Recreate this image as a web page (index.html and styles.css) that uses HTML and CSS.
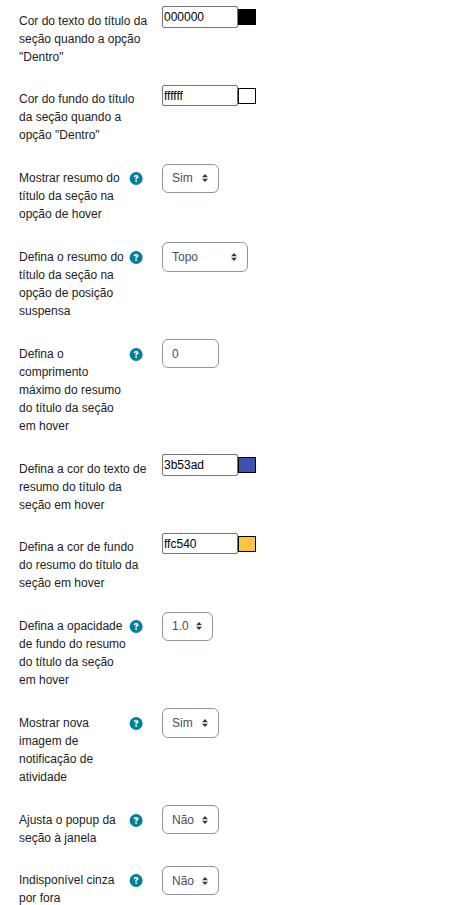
FILE: index.html
```
<!DOCTYPE html>
<html lang="pt-BR">
<head>
<meta charset="utf-8">
<title>Configurações</title>
<link rel="stylesheet" href="styles.css">
</head>
<body>
<svg class="defs" width="0" height="0" aria-hidden="true">
<symbol id="help" viewBox="-24 0 551 512"><circle cx="256" cy="256" r="256"/><path class="mark" d="M169.8 165.3c7.9-22.3 29.1-37.3 52.8-37.3h58.3c34.9 0 63.1 28.3 63.1 63.1c0 22.6-12.1 43.5-31.7 54.8L280 264.4c-.2 13-10.9 23.6-24 23.6c-13.3 0-24-10.7-24-24V250.5c0-8.6 4.6-16.5 12.1-20.8l44.3-25.4c4.7-2.7 7.6-7.7 7.6-13.1c0-8.4-6.8-15.1-15.1-15.1H222.6c-3.4 0-6.4 2.1-7.5 5.3l-.4 1.2c-4.4 12.5-18.2 19-30.6 14.6s-19-18.2-14.6-30.6l.4-1.2zM224 352a32 32 0 1 1 64 0 32 32 0 1 1-64 0z"/></symbol>
<symbol id="arrows" viewBox="0 0 4 5" preserveAspectRatio="none"><path d="M2 0L0 2h4zm0 5L0 3h4z"/></symbol>
</svg>
<main class="form">
<div class="row low"><div class="label">Cor do texto do título da<br>seção quando a opção<br>"Dentro"</div><div class="color tall"><span class="hex">000000</span><span class="swatch black"></span></div></div>
<div class="row"><div class="label">Cor do fundo do título<br>da seção quando a<br>opção "Dentro"</div><div class="color"><span class="hex">ffffff</span><span class="swatch white"></span></div></div>
<div class="row"><div class="label">Mostrar resumo do<br>título da seção na<br>opção de hover</div><svg class="help"><use href="#help"/></svg><div class="field raised">Sim<svg class="arrows"><use href="#arrows"/></svg></div></div>
<div class="row low"><div class="label">Defina o resumo do<br>título da seção na<br>opção de posição<br>suspensa</div><svg class="help"><use href="#help"/></svg><div class="field wide tall">Topo<svg class="arrows"><use href="#arrows"/></svg></div></div>
<div class="row low"><div class="label">Defina o<br>comprimento<br>máximo do resumo<br>do título da seção<br>em hover</div><svg class="help"><use href="#help"/></svg><div class="field">0</div></div>
<div class="row low"><div class="label">Defina a cor do texto de<br>resumo do título da<br>seção em hover</div><div class="color tall"><span class="hex">3b53ad</span><span class="swatch blue"></span></div></div>
<div class="row"><div class="label">Defina a cor de fundo<br>do resumo do título da<br>seção em hover</div><div class="color"><span class="hex">ffc540</span><span class="swatch yellow"></span></div></div>
<div class="row"><div class="label">Defina a opacidade<br>de fundo do resumo<br>do título da seção<br>em hover</div><svg class="help"><use href="#help"/></svg><div class="field narrow raised">1.0<svg class="arrows"><use href="#arrows"/></svg></div></div>
<div class="row low"><div class="label">Mostrar nova<br>imagem de<br>notificação de<br>atividade</div><svg class="help"><use href="#help"/></svg><div class="field tall">Sim<svg class="arrows"><use href="#arrows"/></svg></div></div>
<div class="row low"><div class="label">Ajusta o popup da<br>seção à janela</div><svg class="help"><use href="#help"/></svg><div class="field">Não<svg class="arrows"><use href="#arrows"/></svg></div></div>
<div class="row"><div class="label">Indisponível cinza<br>por fora</div><svg class="help"><use href="#help"/></svg><div class="field">Não<svg class="arrows"><use href="#arrows"/></svg></div></div>
</main>
</body>
</html>
```
FILE: styles.css
```
* { box-sizing: border-box; }
body {
  margin: 0;
  background: #fff;
  color: #1d2125;
  font: 12px/18px "Liberation Sans", Arial, sans-serif;
  overflow: hidden;
}
.defs { display: none; }
.form {
  display: grid;
  grid-template-rows: 79px 79px 78px 97px 115px 79px 79px 96px 97px 61px 39px;
  padding: 6px 0 0 19px;
}
.row {
  display: grid;
  grid-template-columns: 110px 33px 1fr;
  align-items: start;
}
.label {
  grid-column: 1;
  grid-row: 1;
  padding-top: 5px;
  white-space: nowrap;
}
.low .label { padding-top: 6px; }
.help {
  grid-column: 2;
  grid-row: 1;
  width: 14px;
  height: 13px;
  margin-top: 8px;
  fill: #008196;
}
.mark { fill: #fff; stroke: #fff; stroke-width: 16; }
.low .help { margin-top: 9px; }
.field, .color { grid-column: 3; grid-row: 1; }
.field {
  display: flex;
  align-items: center;
  justify-content: space-between;
  width: 57px;
  height: 29px;
  padding: 0 10px 0 9px;
  border: 1px solid #8f959e;
  border-radius: 6px;
  color: #495057;
}
.field.raised { padding-bottom: 1px; }
.field.tall { height: 30px; }
.wide { width: 86px; }
.narrow { width: 51px; }
.arrows { width: 6px; height: 8px; fill: #343a40; }
.color { display: flex; align-items: flex-start; }
.hex {
  width: 76px;
  height: 21px;
  padding-left: 1px;
  border: 1px solid #767676;
  border-radius: 2px;
  color: #000;
  line-height: 21px;
}
.tall .hex { height: 22px; line-height: 20px; }
.swatch {
  width: 18px;
  height: 16px;
  margin-top: 3px;
  border: 1px solid #000;
}
.black { background: #000; }
.white { background: #fff; }
.blue { background: #3b53ad; }
.yellow { background: #ffc540; }
```
